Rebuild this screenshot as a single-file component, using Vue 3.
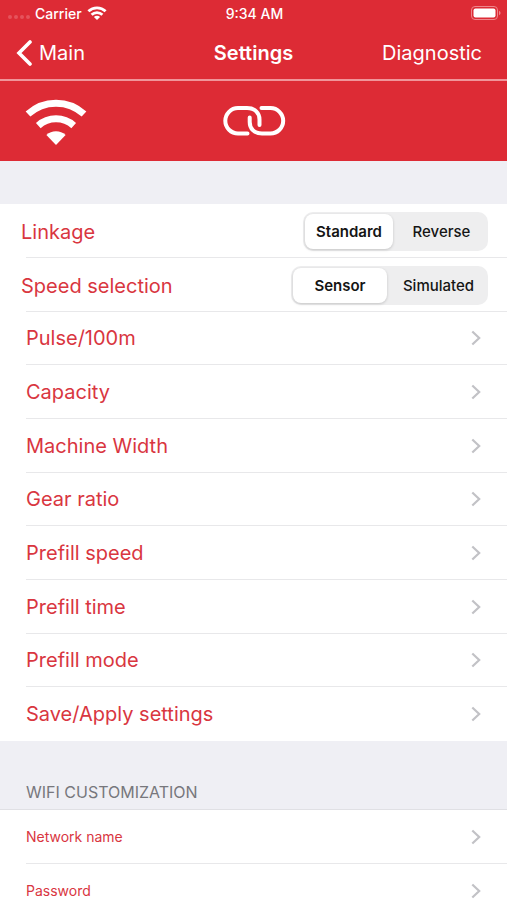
<script setup>
import { ref } from 'vue'

const toggles = ref([
  { id: 'linkage', label: 'Linkage', value: 'Standard', options: ['Standard', 'Reverse'] },
  { id: 'speed', label: 'Speed selection', value: 'Sensor', options: ['Sensor', 'Simulated'] },
])

const links = [
  'Pulse/100m',
  'Capacity',
  'Machine Width',
  'Gear ratio',
  'Prefill speed',
  'Prefill time',
  'Prefill mode',
  'Save/Apply settings',
]

const wifiLinks = ['Network name', 'Password']
</script>

<template>
  <div class="screen">
    <header class="top">
      <div class="status">
        <div class="carrier">
          <span class="dots"><i></i><i></i><i></i><i></i></span>
          <span>Carrier</span>
          <svg class="signal" width="20" height="14" viewBox="0 0 20 14" aria-hidden="true">
            <g fill="none" stroke="#fff" stroke-width="2.8">
              <path d="M1.4 5.3A12.4 12.4 0 0 1 18.6 5.3" />
              <path d="M4.6 8.7A7.8 7.8 0 0 1 15.4 8.7" />
            </g>
            <path d="M10 14L6.9 11A4.4 4.4 0 0 1 13.1 11Z" fill="#fff" />
          </svg>
        </div>
        <span class="time">9:34 AM</span>
        <svg class="battery" width="30" height="14" viewBox="0 0 30 14" aria-hidden="true">
          <rect x="0.5" y="0.5" width="26" height="13" rx="3.5" fill="none" stroke="#ee858b" />
          <rect x="2.5" y="2.5" width="22" height="9" rx="2" fill="#fff" />
          <path d="M28 4.8Q29.6 5.6 29.6 7T28 9.2Z" fill="#ee858b" />
        </svg>
      </div>
      <nav class="nav">
        <a class="back" href="#main">
          <svg width="16" height="26" viewBox="0 0 16 26" aria-hidden="true">
            <path d="M14 2L3 13L14 24" fill="none" stroke="#fff" stroke-width="3.6" stroke-linecap="round" stroke-linejoin="miter" />
          </svg>
          Main
        </a>
        <h1>Settings</h1>
        <a class="diagnostic" href="#diagnostic">Diagnostic</a>
      </nav>
    </header>

    <div class="connection">
      <svg width="62" height="48" viewBox="0 0 62 48" role="img" aria-label="Wi-Fi">
        <g fill="none" stroke="#fff" stroke-width="7">
          <path d="M3 17A41.5 41.5 0 0 1 59 17" />
          <path d="M13.3 28.6A26.5 26.5 0 0 1 48.7 28.6" />
        </g>
        <path d="M31 48L21.4 38A14.5 14.5 0 0 1 40.6 38Z" fill="#fff" />
      </svg>
      <svg width="64" height="32" viewBox="0 0 64 32" role="img" aria-label="Linked">
        <g fill="none" stroke="#fff" stroke-width="4" stroke-linecap="round">
          <path d="M25.5 28.5H16A12.7 12.7 0 0 1 16 3.1H25C33 3.1 37.5 8 37.5 14.5V20" />
          <path d="M39.5 3.1H48.5A12.7 12.7 0 0 1 48.5 28.5H40C32 28.5 27.7 23.5 27.7 17V12.5" />
        </g>
      </svg>
      <span></span>
    </div>

    <main>
      <section class="group first">
        <div v-for="t in toggles" :key="t.id" class="row toggle">
          <span :id="t.id" class="label">{{ t.label }}</span>
          <div class="segments" :class="t.id" role="radiogroup" :aria-labelledby="t.id">
            <label v-for="o in t.options" :key="o" class="segment">
              <input v-model="t.value" type="radio" :name="t.id" :value="o" />
              <span>{{ o }}</span>
            </label>
          </div>
        </div>
        <a v-for="l in links" :key="l" class="row link" href="#">
          <span>{{ l }}</span>
          <svg class="chevron" width="10" height="16" viewBox="0 0 10 16" aria-hidden="true">
            <path d="M1.3 1.5L8.2 8L1.3 14.5" />
          </svg>
        </a>
      </section>

      <h2>WIFI CUSTOMIZATION</h2>
      <section class="group">
        <a v-for="l in wifiLinks" :key="l" class="row link small" href="#">
          <span>{{ l }}</span>
          <svg class="chevron" width="10" height="16" viewBox="0 0 10 16" aria-hidden="true">
            <path d="M1.3 1.5L8.2 8L1.3 14.5" />
          </svg>
        </a>
      </section>
    </main>
  </div>
</template>

<style>
body {
  margin: 0;
  background: #efeff4;
}
html {
  overflow: hidden auto;
  scrollbar-width: none;
}
</style>

<style scoped>
.screen {
  height: 100vh;
  overflow: hidden;
  font-family: Inter, "Liberation Sans", sans-serif;
  background: #efeff4;
}
a {
  color: inherit;
  text-decoration: none;
}
svg {
  display: block;
  flex: none;
}
.top {
  background: #dd2b35;
  color: #fff;
  border-bottom: 2px solid #f0959a;
}
.status {
  display: grid;
  grid-template-columns: 1fr auto 1fr;
  align-items: center;
  height: 26px;
  padding: 0 6px 0 8px;
  font-size: 14px;
  font-weight: 500;
}
.carrier {
  display: flex;
  align-items: center;
  gap: 5px;
}
.dots {
  display: flex;
  gap: 2px;
  padding-top: 8px;
}
.dots i {
  width: 4px;
  height: 4px;
  border-radius: 50%;
  background: #e5535c;
}
.battery {
  justify-self: end;
}
.nav {
  display: grid;
  grid-template-columns: 1fr auto 1fr;
  align-items: center;
  height: 53px;
  padding: 0 25px 0 16px;
  font-size: 20px;
}
.back {
  display: flex;
  align-items: center;
  gap: 7px;
}
h1 {
  margin: 0;
  padding-left: 9px;
  font-size: 20px;
  font-weight: 600;
}
.diagnostic {
  justify-self: end;
}
.connection {
  display: grid;
  grid-template-columns: 1fr auto 1fr;
  align-items: center;
  height: 80px;
  padding: 0 25px;
  background: #dd2b35;
}
.group {
  background: #fff;
}
.first {
  margin-top: 43px;
}
.row {
  display: flex;
  align-items: center;
  justify-content: space-between;
  box-sizing: border-box;
  height: 54px;
  color: #d9363f;
  font-size: 20px;
}
.row:nth-child(3n) {
  height: 53px;
}
.toggle {
  padding: 1px 19px 0 21px;
  background: linear-gradient(#e8e8ea, #e8e8ea) 26px 100% / 100% 1px no-repeat;
}
.link {
  margin-left: 26px;
  padding-right: 26px;
  border-bottom: 1px solid #e8e8ea;
}
.link:last-child {
  border-bottom-color: transparent;
}
.small {
  font-size: 14px;
}
.chevron path {
  fill: none;
  stroke: #c2c2c6;
  stroke-width: 2.2;
}
.segments {
  display: grid;
  box-sizing: border-box;
  height: 39px;
  padding: 2px;
  border-radius: 10px;
  background: #eeeeef;
}
.linkage {
  grid-template-columns: 88px 93px;
}
.speed {
  grid-template-columns: 94px 99px;
}
.segment {
  position: relative;
  display: grid;
}
.segment input {
  position: absolute;
  inset: 0;
  margin: 0;
  opacity: 0;
}
.segment span {
  display: grid;
  place-items: center;
  border-radius: 8px;
  color: #151515;
  font-size: 15px;
  font-weight: 500;
}
.segment:last-child span {
  padding-left: 4px;
}
.segment input:checked + span {
  background: #fff;
  font-weight: 600;
  box-shadow: 0 1px 3px rgba(0, 0, 0, 0.18);
}
h2 {
  display: flex;
  align-items: flex-end;
  box-sizing: border-box;
  height: 69px;
  margin: 0;
  padding: 0 26px 7px;
  border-bottom: 1px solid #e0e0e4;
  color: #77777c;
  font-size: 16px;
  font-weight: 400;
  line-height: 20px;
}
</style>
